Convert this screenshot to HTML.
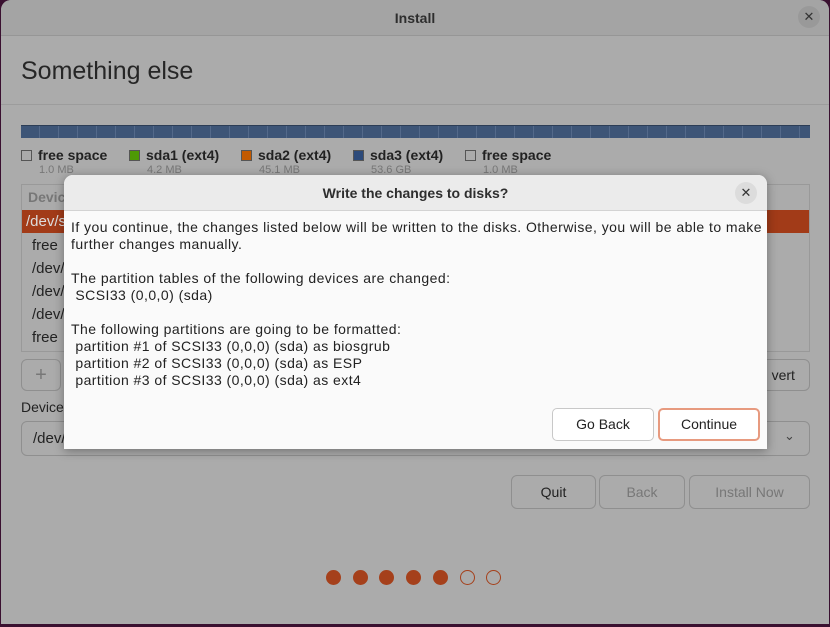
<!DOCTYPE html>
<html><head><style>
*{margin:0;padding:0;box-sizing:border-box}
body{width:830px;height:627px;background:#3a1030;font-family:"Liberation Sans",sans-serif;position:relative;overflow:hidden}
.win{position:absolute;left:1px;top:0;width:828px;height:624px;background:#ababab;border-radius:10px 10px 0 0;overflow:hidden}
.tb{position:absolute;left:0;top:0;width:828px;height:36px;background:#a4a4a4;border-bottom:1px solid #969696;text-align:center;line-height:36px;font-size:14px;font-weight:bold;color:#2e2e2e}
.x{position:absolute;width:22px;height:22px;border-radius:50%;background:#999;text-align:center;line-height:22px;font-size:13px;color:#333}
.a{position:absolute;white-space:nowrap}
.hd{top:57px;left:20px;font-size:25px;color:#262626}
.sep{position:absolute;left:0;top:104px;width:828px;height:1px;background:#9c9c9c}
.bar{position:absolute;left:20px;top:125px;width:789px;height:13px;background:repeating-linear-gradient(90deg,#3d5577 0 18px,#53698a 18px 19px);border-top:1px solid #2c3d56}
.lg{top:147px;font-size:14px;font-weight:bold;color:#222}
.sw{display:inline-block;width:11px;height:11px;border:1px solid #555;vertical-align:-1px;margin-right:6px}
.sz{top:164px;font-size:11px;color:#777}
.tbl{position:absolute;left:20px;top:184px;width:789px;height:168px;border:1px solid #999}
.sel{position:absolute;left:21px;top:210px;width:787px;height:23px;background:#a23b18}
.btn{position:absolute;border:1px solid #8f8f8f;border-radius:6px;text-align:center;font-size:14px}
.dlg{position:absolute;left:64px;top:175px;width:703px;height:274px;background:#fafafa;border-radius:9px 9px 0 0;box-shadow:0 2px 10px rgba(0,0,0,.35);overflow:hidden}
.dh{height:36px;background:#ebebeb;border-bottom:1px solid #d3d3d3;text-align:center;line-height:36px;font-size:14px;font-weight:bold;color:#2e2e2e}
.body{position:absolute;left:7px;top:44px;font-size:14px;line-height:17px;color:#222;letter-spacing:0.45px}
.db{position:absolute;top:233px;height:33px;border-radius:5px;background:#fff;text-align:center;font-size:14px;color:#222}
.dot{position:absolute;top:570px;width:15px;height:15px;border-radius:50%;background:#a5401b}
.dot.o{background:none;border:1.5px solid #a5401b}
</style></head><body>
<div class="win">
<div class="tb">Install</div>
<div class="x" style="left:797px;top:6px">✕</div>
<div class="a hd">Something else</div>
<div class="sep"></div>
<div class="bar"></div>
<div class="a lg" style="left:20px"><span class="sw"></span>free space</div>
<div class="a lg" style="left:128px"><span class="sw" style="background:#4e9a06"></span>sda1 (ext4)</div>
<div class="a lg" style="left:240px"><span class="sw" style="background:#c35a00"></span>sda2 (ext4)</div>
<div class="a lg" style="left:352px"><span class="sw" style="background:#2c4a7a"></span>sda3 (ext4)</div>
<div class="a lg" style="left:464px"><span class="sw"></span>free space</div>
<div class="a sz" style="left:38px">1.0 MB</div>
<div class="a sz" style="left:146px">4.2 MB</div>
<div class="a sz" style="left:258px">45.1 MB</div>
<div class="a sz" style="left:370px">53.6 GB</div>
<div class="a sz" style="left:482px">1.0 MB</div>
<div class="tbl"></div>
<div class="a" style="left:27px;top:189px;font-size:14px;font-weight:bold;color:#777">Devic</div>
<div class="sel"></div>
<div class="a" style="left:25px;top:213px;font-size:15px;color:#ddd">/dev/s</div>
<div class="a" style="left:31px;top:237px;font-size:15px;color:#222">free</div>
<div class="a" style="left:31px;top:260px;font-size:15px;color:#222">/dev/</div>
<div class="a" style="left:31px;top:283px;font-size:15px;color:#222">/dev/</div>
<div class="a" style="left:31px;top:306px;font-size:15px;color:#222">/dev/</div>
<div class="a" style="left:31px;top:329px;font-size:15px;color:#222">free</div>
<div class="btn" style="left:20px;top:359px;width:40px;height:32px;line-height:30px;font-size:20px;color:#777">+</div>
<div class="btn" style="left:740px;top:359px;width:69px;height:32px;line-height:30px;color:#222">&nbsp;&nbsp;&nbsp;&nbsp;vert</div>
<div class="a" style="left:20px;top:399px;font-size:14px;color:#222">Device</div>
<div class="btn" style="left:20px;top:421px;width:789px;height:35px;line-height:33px;text-align:left;padding-left:11px;font-size:15px;color:#222">/dev/</div>
<div class="a" style="left:783px;top:428px;font-size:13px;color:#444">⌄</div>
<div class="btn" style="left:510px;top:475px;width:85px;height:34px;line-height:32px;color:#222">Quit</div>
<div class="btn" style="left:598px;top:475px;width:86px;height:34px;line-height:32px;color:#777">Back</div>
<div class="btn" style="left:688px;top:475px;width:121px;height:34px;line-height:32px;color:#777">Install Now</div>
<div class="dot" style="left:325px"></div>
<div class="dot" style="left:352px"></div>
<div class="dot" style="left:378px"></div>
<div class="dot" style="left:405px"></div>
<div class="dot" style="left:432px"></div>
<div class="dot o" style="left:459px"></div>
<div class="dot o" style="left:485px"></div>
</div>
<div class="dlg">
<div class="dh">Write the changes to disks?</div>
<div class="x" style="left:671px;top:7px;background:#dcdcdc">✕</div>
<div class="body">If you continue, the changes listed below will be written to the disks. Otherwise, you will be able to make<br>further changes manually.<br><br>The partition tables of the following devices are changed:<br>&nbsp;SCSI33 (0,0,0) (sda)<br><br>The following partitions are going to be formatted:<br>&nbsp;partition #1 of SCSI33 (0,0,0) (sda) as biosgrub<br>&nbsp;partition #2 of SCSI33 (0,0,0) (sda) as ESP<br>&nbsp;partition #3 of SCSI33 (0,0,0) (sda) as ext4</div>
<div class="db" style="left:488px;width:102px;border:1px solid #c8c8c8;line-height:31px">Go Back</div>
<div class="db" style="left:594px;width:102px;border:2px solid #e79a7f;line-height:29px">Continue</div>
</div>
</body></html>
